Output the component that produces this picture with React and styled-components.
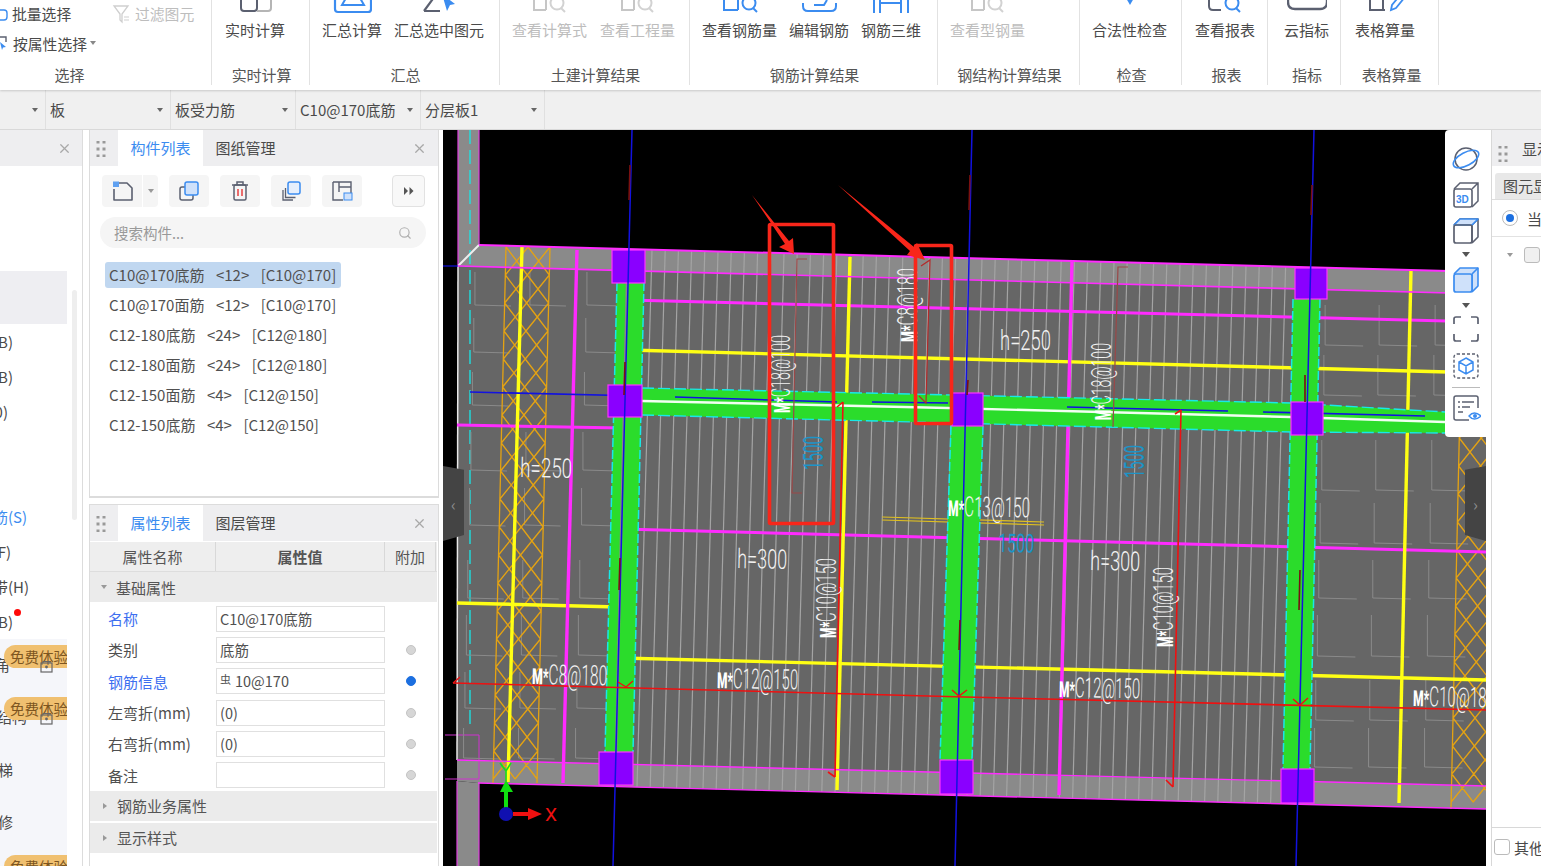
import React from "react";
import styled, { createGlobalStyle } from "styled-components";
import { X, Search } from "lucide-react";

const Global = createGlobalStyle`
  html, body { margin: 0; padding: 0; background: #fff; overflow: hidden; }
  #root { width: 1541px; height: 866px; }
  * { box-sizing: border-box; }
`;

const FONT = `"Noto Sans CJK SC", "Noto Sans", "Liberation Sans", sans-serif`;
const BLUE = "#3b8cf0";
const INK = "#5b6070";

const Page = styled.div`
  width: 1541px; height: 866px; overflow: hidden; display: flex; flex-direction: column;
  font-family: ${FONT}; font-size: 15px; color: #4a4a4a; background: #fff;
`;
const Ribbon = styled.div`
  height: 90px; flex: none; display: flex; background: #fff; box-shadow: 0 1px 2px rgba(0,0,0,.16); position: relative; z-index: 2;
`;
const Group = styled.div`
  width: ${p => p.$w}px; height: 85px; flex: none; display: flex; flex-direction: column;
  border-right: ${p => (p.$last ? "0" : "1px solid #e2e2e2")};
`;
const GroupBody = styled.div`
  height: 64px; display: flex; gap: ${p => p.$gap || 12}px; padding-left: ${p => p.$pad || 12}px;
`;
const GroupLabel = styled.div`
  height: 21px; line-height: 21px; text-align: center; color: #555; white-space: nowrap; font-size: 15px; letter-spacing: -.1px;
  padding-left: ${p => p.$nudge ?? 2}px; padding-right: ${p => p.$tail || 0}px;
`;
const Tool = styled.div`
  display: flex; flex-direction: column; align-items: center; white-space: nowrap; color: ${p => (p.$off ? "#bdbdbd" : "#4a4a4a")};
`;
const ToolIcon = styled.svg`
  width: 40px; height: 14px; display: block; margin-bottom: 6px; overflow: hidden;
`;
const ToolText = styled.span` line-height: 20px; `;

const SelectGrid = styled.div`
  height: 64px; display: grid; grid-template-columns: 112px 100px; grid-template-rows: 27px 32px;
`;
const SmallTool = styled.div`
  display: flex; align-items: center; gap: 3px; white-space: nowrap; font-size: 14.8px; color: ${p => (p.$off ? "#bdbdbd" : "#4a4a4a")};
`;

const SubBar = styled.div`
  height: 40px; flex: none; display: flex; background: #f0f0f0; border-bottom: 1px solid #d9d9d9; padding-left: 45px;
`;
const Combo = styled.div`
  width: 125px; display: flex; align-items: center; justify-content: space-between; padding: 0 7px 0 4px; border-left: 1px solid #e0e0e0; position: relative;
  &:last-child { border-right: 1px solid #e0e0e0; }
`;
const Caret = styled.span`
  width: 0; height: 0; border-left: 3px solid transparent; border-right: 3px solid transparent; border-top: 4px solid ${p => p.$c || "#666"}; flex: none; display: inline-block;
`;
const LeadCaret = styled(Caret)` position: absolute; left: 32px; top: 108px; `;

const Main = styled.div` flex: 1; display: flex; min-height: 0; background: #fff; `;

const NavPanel = styled.div`
  width: 83px; flex: none; border-right: 1px solid #dcdcdc; overflow: hidden; position: relative; display: flex; flex-direction: column; margin-right: 6px;
`;
const Header = styled.div`
  height: 36px; flex: none; background: #eeeef0; display: flex; align-items: stretch; position: relative;
`;
const Close = styled(X)`
  position: absolute; right: ${p => p.$r || 11}px; top: 11px; width: 15px; height: 15px; color: #a8a8a8;
`;
const NavBody = styled.div` flex: 1; padding-top: 105px; position: relative; `;
const NavSel = styled.div` width: 67px; height: 53px; background: #eeeef2; `;
const NavRow = styled.div`
  width: ${p => p.$end}px; height: ${p => p.$h || 35}px; display: flex; align-items: center; justify-content: flex-end; white-space: nowrap;
  color: ${p => p.$blue ? BLUE : "#4a4a4a"}; position: relative;
`;
const NavFree = styled.div` width: 67px; background: #f5f6fa; `;
const FreeRow = styled.div` height: 52.4px; position: relative; padding-top: 14px; white-space: nowrap; display: flex; `;
const Clip = styled.span` width: ${p => p.$end}px; display: flex; justify-content: flex-end; overflow: visible; height: 24px; line-height: 24px; `;
const Badge = styled.span`
  position: absolute; left: 4px; top: 6px; width: 63px; height: 23px; background: #f0c070; border-radius: 12px 0 0 12px; color: #7d5520; font-size: 14.5px; line-height: 23px; padding-left: 6px; white-space: nowrap; overflow: hidden;
`;
const Lock = styled.svg` position: absolute; left: 40px; top: 20px; width: 13px; height: 14px; `;
const Dot = styled.span` position: absolute; width: 7px; height: 7px; border-radius: 50%; background: #ff0a0a; left: 14px; top: 5px; `;
const NavScroll = styled.div` position: absolute; left: 72px; top: 124px; width: 5px; height: 230px; background: #eeeeee; border-radius: 3px; `;

const MidCol = styled.div` width: 350px; flex: none; display: flex; flex-direction: column; gap: 6px; margin-right: 4px; `;
const Panel = styled.div`
  border: 1px solid #dcdcdc; border-top: ${p => p.$nt ? 0 : "1px solid #dcdcdc"}; border-bottom: ${p => p.$nb ? 0 : "2px solid #dcdcdc"}; height: ${p => p.$h}px; flex: none; display: flex; flex-direction: column; overflow: hidden; background: #fff;
`;
const Grip = styled.svg` width: 10px; height: 16px; margin: 11px 12px 0 6px; flex: none; `;
const Tab = styled.div`
  width: 85px; text-align: center; line-height: 36px; white-space: nowrap;
  background: ${p => (p.$on ? "#fff" : "transparent")}; color: ${p => (p.$on ? BLUE : "#4a4a4a")};
`;
const IconRow = styled.div` height: 32px; margin: 9px 0 0 12px; display: flex; flex: none; position: relative; `;
const IconBtn = styled.div`
  width: ${p => p.$w || 40}px; height: 32px; background: #f5f5f5; border-radius: ${p => p.$r || "4px"}; display: flex; align-items: center; justify-content: center;
  margin-right: ${p => p.$m ?? 11}px;
`;
const MoreBtn = styled(IconBtn)` position: absolute; left: 290px; border: 1px solid #e2e2e2; background: #f8f8f8; width: 33px; `;
const SearchBox = styled.div`
  height: 31px; margin: 10px 12px 0 10px; flex: none; border-radius: 16px; background: #f5f5f5; display: flex; align-items: center; justify-content: space-between; padding: 0 14px; color: #999; font-size: 14.5px;
`;
const List = styled.div` margin: 12px 0 0 15px; display: flex; flex-direction: column; `;
const ListRow = styled.div`
  height: 30px; display: flex; align-items: center;
  & > span { padding: 0 4px; height: 26px; line-height: 26px; border-radius: 3px; white-space: pre; font-size: 15px; word-spacing: 2.4px; color: #505050; background: ${p => (p.$on ? "#c0d7f0" : "transparent")}; width: ${p => (p.$on ? "236px" : "auto")}; }
`;

const PropHead = styled.div`
  height: 31px; flex: none; display: grid; grid-template-columns: 126px 169px 51px; background: #eeeeee; border-top: 1px solid #fff; border-bottom: 1px solid #ddd; margin-right: 1px;
`;
const HeadCell = styled.div`
  text-align: center; line-height: 30px; border-right: 1px solid #d8d8d8; font-weight: ${p => p.$b ? 700 : 400}; color: #555; overflow: hidden;
`;
const Section = styled.div`
  height: ${p => p.$h || 30}px; background: #ebebeb; flex: none; margin-right: 1px; margin-bottom: ${p => p.$mb || 0}px; display: flex; align-items: center; padding-left: 11px; gap: 9px; color: #555;
`;
const ArrowDown = styled(Caret)` border-top-color: #999; `;
const ArrowRight = styled.span`
  width: 0; height: 0; border-top: 3.5px solid transparent; border-bottom: 3.5px solid transparent; border-left: 4px solid #999; margin: 0 1px 0 2px;
`;
const PropRows = styled.div` padding: 1px 0 0; flex: none; `;
const PropRow = styled.div`
  height: 31.3px; display: grid; grid-template-columns: 126px 169px 51px; align-items: center;
`;
const PropName = styled.div` padding-left: 18px; white-space: nowrap; color: ${p => (p.$blue ? "#3d6ff0" : "#4f4f4f")}; `;
const PropInput = styled.div`
  height: 26px; border: 1px solid #e0e0e0; line-height: 24px; padding-left: 3px; color: #505050; white-space: nowrap; font-size: 14.5px;
`;
const SteelMark = styled.span` font-size: 11px; position: relative; top: -3px; margin-right: 4px; `;
const Radio = styled.span`
  width: 10px; height: 10px; border-radius: 50%; justify-self: center; background: ${p => (p.$on ? "#1c6fe0" : "#d6d6d6")}; border: 1px solid ${p => (p.$on ? "#1c6fe0" : "#c4c4c4")};
`;

const Canvas = styled.div` width: 1043px; flex: none; position: relative; background: #000; overflow: hidden; margin-right: 5px; `;
const Drawing = styled.svg` display: block; width: 1043px; height: 736px; `;
const CadText = styled.text`
  font-family: Roboto, "Liberation Sans", sans-serif; fill: ${p => p.$c || "#f2f2f2"}; font-weight: ${p => (p.$c ? 400 : 300)};
`;
const CadMark = styled.tspan` font-weight: 900; fill: #fff; font-size: 22px; `;
const Handle = styled.div`
  position: absolute; top: 336px; width: 21px; height: 75px; background: #444; color: #8c8c8c; display: flex; align-items: center; justify-content: center; font-size: 16px;
  ${p => p.$side === "left"
    ? "left: 0; clip-path: polygon(0 0, 100% 5%, 100% 92%, 0 100%);"
    : "right: 0; clip-path: polygon(0 5%, 100% 0, 100% 100%, 0 92%);"}
`;
const ViewBar = styled.div`
  position: absolute; right: 0; top: 0; width: 41px; height: 307px; background: #fff; border-radius: 4px 0 0 4px; display: flex; flex-direction: column; align-items: center; padding-top: 14px;
`;
const ViewIcon = styled.svg` width: 30px; height: ${p => p.$h || 30}px; display: block; margin-bottom: ${p => p.$mb ?? 6}px; flex: none; `;
const ViewCaret = styled(Caret)` border-left-width: 4px; border-right-width: 4px; border-top-width: 5px; margin: ${p => p.$m || "6px 0 7px"}; border-top-color: #555; `;
const ViewSep = styled.div` width: 28px; height: 1px; background: #bbb; margin: 2px 0 5px; flex: none; `;

const RightPanel = styled.div`
  width: 50px; flex: none; border-left: 1px solid #d8d8d8; display: flex; flex-direction: column; overflow: hidden; white-space: nowrap;
`;
const RightHead = styled.div` height: 36px; flex: none; background: #eeeef0; display: flex; align-items: center; & > span { padding-left: 2px; } `;
const RightTab = styled.div` height: 26px; margin: 7px 0 0 3px; flex: none; background: #e8e8e8; line-height: 26px; padding-left: 8px; border-radius: 3px 0 0 0; `;
const RightRadioRow = styled.div` height: 38px; flex: none; display: flex; align-items: center; gap: 9px; padding-left: 10px; border-bottom: 1px solid #e2e2e2; border-top: 1px solid #ddd; `;
const RadioRing = styled.span` width: 16px; height: 16px; border-radius: 50%; border: 1px solid #bbb; display: flex; align-items: center; justify-content: center; flex: none; &::after { content: ""; width: 8px; height: 8px; border-radius: 50%; background: #1c6fe0; } `;
const TreeRow = styled.div` height: 36px; display: flex; align-items: center; gap: 11px; padding-left: 15px; flex: none; `;
const Check = styled.span` width: 16px; height: 16px; border: 1px solid #bbb; border-radius: 3px; background: ${p => p.$f ? "#f0f0f0" : "#fff"}; flex: none; `;
const Spacer = styled.div` flex: 1; `;
const RightFoot = styled.div` height: 39px; flex: none; border-top: 1px solid #d8d8d8; display: flex; align-items: center; gap: 4px; padding: 0 0 0 2px; `;

/* ----- little icons ----- */
const GripDots = () => (
  <Grip viewBox="0 0 10 16">
    {[1, 8, 15].flatMap(y => [2, 8].map(x => <rect key={x + "-" + y} x={x - 1.5} y={y - 1.5} width="3" height="3" fill="#999" />))}
  </Grip>
);

const Partial = ({ kind, off }) => {
  const d = off ? "#c6c6c6" : INK;
  const b = off ? "#d2d2d2" : BLUE;
  const shapes = {
    calc: <><path d="M6 -8V8q0 3 3 3H19q3 0 3-3V-8" fill="none" stroke={d} strokeWidth="2" /><path d="M22 11h11q3 0 3-3V-8" fill="none" stroke="#b5b5b5" strokeWidth="2" /></>,
    sum: <><rect x="3" y="-14" width="36" height="26" rx="3" fill="none" stroke={BLUE} strokeWidth="2.2" /><path d="M10 5h22L28 -2H14z" fill="none" stroke={BLUE} strokeWidth="2" /></>,
    sumSel: <><path d="M5 11H21M5 11L16 -4" fill="none" stroke={d} strokeWidth="2.2" /><path d="M23 -6l13 10-5 1-3 6z" fill={BLUE} /></>,
    view: <><path d="M4 -6V10H16M16 -6V10" fill="none" stroke={d} strokeWidth="2" /><circle cx="27" cy="3" r="6.5" fill="none" stroke={b} strokeWidth="2" /><path d="M31 8l4 4" stroke={b} strokeWidth="2" /></>,
    viewBlue: <><path d="M4 -6V10H18M18 -6V10" fill="none" stroke={BLUE} strokeWidth="2" /><circle cx="29" cy="3" r="6.5" fill="none" stroke={BLUE} strokeWidth="2" /><path d="M33 8l4 4" stroke={BLUE} strokeWidth="2" /></>,
    edit: <><path d="M4 3V6q0 5 5 5H32q5 0 5-5V3" fill="none" stroke={BLUE} strokeWidth="2" /><path d="M15 5h10l3-5" fill="none" stroke={BLUE} strokeWidth="2" /></>,
    three: <><path d="M3 -8V13M9 -8V13M30 -8V13M37 -8V13" fill="none" stroke={BLUE} strokeWidth="2" /><path d="M9 3H30" stroke={BLUE} strokeWidth="2" /></>,
    check: <path d="M16 -2h8l-4 7z" fill={BLUE} />,
    report: <><path d="M4 -6V6q0 4 4 4H16" fill="none" stroke={d} strokeWidth="2" /><circle cx="27" cy="3" r="6.5" fill="none" stroke={BLUE} strokeWidth="2" /><path d="M31 8l4 4" stroke={BLUE} strokeWidth="2" /></>,
    cloud: <path d="M1 -6V2q0 7 7 7H33q7 0 7-7V-6" fill="none" stroke={d} strokeWidth="2.4" />,
    sheet: <><path d="M5 -6V10H20M18 -6V10" fill="none" stroke={d} strokeWidth="2" /><path d="M26 10l1-5 9-11 4 3-9 11z" fill="none" stroke={BLUE} strokeWidth="1.8" /></>,
  };
  return <ToolIcon viewBox="0 0 40 14">{shapes[kind]}</ToolIcon>;
};

const RTool = ({ kind, off, children }) => (
  <Tool $off={off}><Partial kind={kind} off={off} /><ToolText>{children}</ToolText></Tool>
);

/* ----- CAD drawing ----- */
const range = (a, b, s) => { const o = []; for (let v = a; v <= b; v += s) o.push(v); return o; };
const PINK = "#ff2bff";
const YEL = "#ffff14";
const CYAN = "#18e8e8";
const GREEN = "#2bdc2b";

const Hatch = ({ l0, l1, y0, y1, w }) => {
  const at = y => l0 + ((y - y0) / (y1 - y0)) * (l1 - l0);
  const p = 28;
  const out = [];
  range(y0, y1 - p, p).forEach(y => {
    const a = at(y), b = at(y + p);
    [0, .5].forEach(f => {
      out.push(`M${a + f * w} ${y}L${b + (f + .5) * w} ${y + p}`);
      out.push(`M${a + (f + .5) * w} ${y}L${b + f * w} ${y + p}`);
    });
  });
  out.push(`M${l0} ${y0}L${l1} ${y1}M${l0 + w} ${y0}L${l1 + w} ${y1}`);
  return <path d={out.join("")} fill="none" stroke="#e5a312" strokeWidth="1.3" />;
};

const Corners = () => {
  const out = [];
  const rows = [[272, 305], [318, 352], [372, 405], [432, 470], [488, 525], [560, 598], [615, 655], [672, 708], [728, 758]];
  rows.forEach(([a, b]) => {
    [475, 530, 587].forEach(x => {
      const xx = x - (a - 270) * 0.025;
      if (x === 530 && a < 430 && a > 300) return;
      out.push(`M${xx} ${a}L${xx} ${b}L${xx + 36} ${b + 1}`);
    });
  });
  const rows2 = [[305, 345], [355, 395], [440, 490], [503, 543], [560, 598], [615, 656], [680, 720], [728, 767]];
  rows2.forEach(([a, b]) => {
    [1326, 1380, 1436].forEach(x => {
      const xx = x - (a - 270) * 0.025;
      out.push(`M${xx} ${a}L${xx} ${b}L${xx + 38} ${b + 1}`);
    });
  });
  return <path d={out.join("")} fill="none" stroke="#8a8a8a" strokeWidth="1" />;
};

const Beam = ({ a, b, c, d, line }) => (
  <>
    <polygon points={`${a} ${b} ${c} ${b} ${d[1]} ${d[2]} ${d[0]} ${d[2]}`} fill={GREEN} />
    <line x1={a} y1={b} x2={d[0]} y2={d[2]} stroke={CYAN} strokeWidth="1.5" strokeDasharray="9 3" />
    <line x1={c} y1={b} x2={d[1]} y2={d[2]} stroke={CYAN} strokeWidth="1.5" strokeDasharray="9 3" />
    {line}
  </>
);

const Pier = ({ x, y, w = 33, h = 33 }) => <rect x={x} y={y} width={w} height={h} fill="#8a00ff" stroke="#ff33ff" strokeWidth="1.2" />;

const Label = ({ x, y, len, size = 28, rot = 1.4, c, mark, children }) => (
  <CadText x={x} y={y} fontSize={size} textLength={len} lengthAdjust="spacingAndGlyphs" $c={c}
    transform={`rotate(${rot} ${x} ${y})`}>{mark && <CadMark>{mark}</CadMark>}{children}</CadText>
);

const Plan = () => {
  const rebar = range(652, 1292, 13.2);
  const topY = x => 245 + ((x - 479) * 27) / 1007;
  const botY = x => 783 + ((x - 478) * 26) / 1008;
  return (
    <Drawing viewBox="443 130 1043 736">
      <polygon points="458,130 479,130 479,245 458,266" fill="#8a8a8a" />
      <polygon points="457,781 479,783 479,866 457,866" fill="#8a8a8a" />
      <polygon points="458,266 479,245 1486,272 1486,294" fill="#8a8a8a" />
      <polygon points="458,266 1486,294 1486,786 457,760" fill="#666" />
      <polygon points="457,760 1486,786 1486,809 478,783 457,781" fill="#8a8a8a" />

      <path d="M458 130V266M479 130V245M457 781V866M479 783V866" stroke="#e040e0" strokeWidth="1.2" fill="none" />
      <path d="M445 735H479V779H445" stroke="#d030d0" strokeWidth="1" fill="none" />
      <line x1="470" y1="130" x2="470" y2="730" stroke={CYAN} strokeWidth="1.3" strokeDasharray="14 6" />
      <path d="M458 266L479 245" stroke="#eee" strokeWidth="2" />
      <line x1="458" y1="266" x2="457" y2="760" stroke="#e8e8e8" strokeWidth="1.5" />
      <line x1="443" y1="266" x2="458" y2="266" stroke="#1010e0" strokeWidth="1.2" />

      {rebar.map(x => (
        <line key={x} x1={x} y1={topY(x)} x2={x - 15} y2={botY(x - 15)} stroke="#a4a4a4" strokeWidth="1.2" />
      ))}
      <Corners />
      <Hatch l0={506} l1={493} y0={247} y1={783} w={44} />
      <Hatch l0={1463} l1={1451} y0={270} y1={809} w={44} />

      <line x1="628" y1="300" x2="1486" y2="322" stroke={PINK} strokeWidth="3" />
      <line x1="457" y1="425" x2="622" y2="428" stroke={PINK} strokeWidth="3" />
      <line x1="622" y1="529" x2="1486" y2="552" stroke={PINK} strokeWidth="3" />
      <line x1="628" y1="350" x2="1486" y2="373" stroke={YEL} strokeWidth="3.4" />
      <line x1="457" y1="603" x2="618" y2="607" stroke={YEL} strokeWidth="3.4" />
      <line x1="620" y1="658" x2="1486" y2="680" stroke={YEL} strokeWidth="3.4" />
      <path d="M882 517L1044 522M882 520L1044 525" stroke="#e0c020" strokeWidth="1.2" />

      <line x1="522" y1="247" x2="508" y2="782" stroke={YEL} strokeWidth="3.4" />
      <line x1="850" y1="257" x2="837" y2="790" stroke={YEL} strokeWidth="3.4" />
      <line x1="1411" y1="270" x2="1399" y2="803" stroke={YEL} strokeWidth="3.4" />
      <line x1="577" y1="250" x2="563" y2="783" stroke={PINK} strokeWidth="3.4" />
      <line x1="1072" y1="262" x2="1059" y2="795" stroke={PINK} strokeWidth="3.4" />

      <Beam a={617} b={282} c={644} d={[605, 633, 752]} line={<line x1="627" y1="282" x2="616" y2="752" stroke="#888" strokeWidth="2.5" />} />
      <Beam a={951} b={426} c={983} d={[940, 972, 760]} />
      <Beam a={1293} b={299} c={1320} d={[1283, 1310, 769]} />
      <polygon points="642,388 953,395 1291,403 1445,412 1445,433 1291,432 953,423 642,415" fill={GREEN} />
      <path d="M642 388L953 395L1291 403L1445 412M642 415L953 423L1291 432L1445 433" stroke={CYAN} strokeWidth="1.4" strokeDasharray="12 4" fill="none" />
      <path d="M642 401L948 408L1290 417L1445 422" stroke="#f2fff2" strokeWidth="2.4" fill="none" />
      <path d="M470 392L642 396M675 397L837 402M872 402L948 403M1067 407L1228 411M1263 412L1425 416" stroke="#1212e0" strokeWidth="1.6" fill="none" />

      <path d="M479 245L1486 272" stroke={PINK} strokeWidth="2" />
      <path d="M458 266L1486 294" stroke={PINK} strokeWidth="1.6" />
      <path d="M457 760L1486 786" stroke={PINK} strokeWidth="1.4" />
      <path d="M478 783L1486 809" stroke={PINK} strokeWidth="1.4" />

      <Pier x={612} y={250} />
      <Pier x={608} y={385} h={32} w={34} />
      <Pier x={599} y={752} w={34} />
      <Pier x={952} y={393} w={31} />
      <Pier x={940} y={760} h={34} w={33} />
      <Pier x={1295} y={268} w={32} h={31} />
      <Pier x={1291} y={402} w={32} />
      <Pier x={1281} y={769} h={34} />

      <path d="M632 130L613 866M972 130L955 866M1314 130L1296 866" stroke="#1212e0" strokeWidth="1.5" fill="none" />
      <path d="M630 165L629 200M970 175L969 210M1312 185L1311 215M625 362L624 395M968 380L967 395M1305 375L1305 402M620 558L619 590M960 620L959 650M1300 570L1299 610" stroke="#7a1010" strokeWidth="1.6" fill="none" />

      <path d="M453 683L965 697L1486 710" stroke="#ee1111" strokeWidth="1.6" fill="none" />
      <path d="M453 683L460 677M618 682l8 5 7-6M952 690l7 6 8-6M1293 699l7 6 8-7" stroke="#ee1111" strokeWidth="1.4" fill="none" />
      <path d="M1181 410L1173 787M1173 787l-7-7M1181 410l-6 4" stroke="#ee1111" strokeWidth="1.6" fill="none" />
      <path d="M843 402L835 777M835 777l-7-5M843 402l-6 5" stroke="#ee1111" strokeWidth="1.6" fill="none" />
      <path d="M807 259H797L792 493H802M1128 267H1118L1113 427" stroke="#9a4848" strokeWidth="1.2" fill="none" />
      <path d="M921 266L930 260L926 403L919 396" stroke="#b52a2a" strokeWidth="1.2" fill="none" />

      <Label x={520} y={477} len={52} size={27} rot={1}>h=250</Label>
      <Label x={1000} y={350} len={51} size={27} rot={0}>h=250</Label>
      <Label x={737} y={568} len={50} size={27} rot={1}>h=300</Label>
      <Label x={1090} y={570} len={50} size={27} rot={1}>h=300</Label>
      <Label x={532} y={684} len={75} size={28} rot={1} mark="M*">C8@180</Label>
      <Label x={717} y={688} len={81} size={28} rot={1} mark="M*">C12@150</Label>
      <Label x={1059} y={697} len={81} size={28} rot={1} mark="M*">C12@150</Label>
      <Label x={1413} y={706} len={82} size={28} rot={1} mark="M*">C10@180</Label>
      <Label x={948} y={516} len={82} size={28} rot={1} mark="M*">C13@150</Label>
      <Label x={790} y={413} len={78} size={27} rot={-90} mark="M*">C18@100</Label>
      <Label x={917} y={342} len={74} size={27} rot={-90} mark="M*">C8@180</Label>
      <Label x={1111} y={420} len={77} size={27} rot={-90} mark="M*">C18@100</Label>
      <Label x={836} y={638} len={80} size={27} rot={-90} mark="M*">C10@150</Label>
      <Label x={1173} y={647} len={80} size={27} rot={-90} mark="M*">C10@150</Label>
      <Label x={823} y={470} len={34} size={27} rot={-90} c="#1c94c8">1500</Label>
      <Label x={1144} y={478} len={33} size={27} rot={-90} c="#1c94c8">1500</Label>
      <Label x={998} y={552} len={36} size={26} rot={1} c="#1c94c8">1500</Label>

      <path d="M500 763l6 8 5-8M506 771V781" stroke="#18e018" strokeWidth="1.6" fill="none" />
      <path d="M506 780l7 12H500z" fill="#10e010" />
      <rect x="504" y="792" width="4" height="20" fill="#10e010" />
      <rect x="513" y="812" width="16" height="4" fill="#f01010" />
      <path d="M528 808l14 6-14 6z" fill="#f01010" />
      <circle cx="506" cy="814" r="7" fill="#1010b0" />
      <CadText x="545" y="821" fontSize="19" $c="#f01010" textLength="12" lengthAdjust="spacingAndGlyphs">X</CadText>

      <rect x="769.5" y="224.5" width="64" height="299" fill="none" stroke="#f8261a" strokeWidth="3.6" rx="1" />
      <rect x="915.5" y="245.5" width="36" height="178" fill="none" stroke="#f8261a" strokeWidth="3.6" rx="1" />
      <polygon points="752,195 789,241 793,238 794,254 779,247 785,244" fill="#f8261a" />
      <polygon points="838,185 914,247 917,243 925,260 907,255 910,251" fill="#f8261a" />
    </Drawing>
  );
};

const Cube = ({ fill, top }) => (
  <ViewIcon viewBox="0 0 30 30">
    <path d="M3 9L9 3H27V21L21 27" fill={fill ? "#cfe1fa" : "none"} stroke={fill ? BLUE : INK} strokeWidth="1.6" strokeLinejoin="round" />
    <path d="M21 9V27M21 9L27 3" stroke={fill ? BLUE : INK} strokeWidth="1.6" />
    {top && <path d="M3 9L9 3H27L21 9z" fill="#cfe1fa" stroke={BLUE} strokeWidth="1.6" strokeLinejoin="round" />}
    <rect x="3" y="9" width="18" height="18" rx="2" fill={fill ? "#cfe1fa" : "none"} stroke={fill ? BLUE : INK} strokeWidth="1.7" />
  </ViewIcon>
);

const names = [
  "C10@170底筋  <12>  [C10@170]",
  "C10@170面筋  <12>  [C10@170]",
  "C12-180底筋  <24>  [C12@180]",
  "C12-180面筋  <24>  [C12@180]",
  "C12-150面筋  <4>  [C12@150]",
  "C12-150底筋  <4>  [C12@150]",
];

const props = [
  { n: "名称", v: "C10@170底筋", blue: true },
  { n: "类别", v: "底筋", r: true },
  { n: "钢筋信息", v: "10@170", steel: true, blue: true, r: true, on: true },
  { n: "左弯折(mm)", v: "(0)", r: true },
  { n: "右弯折(mm)", v: "(0)", r: true },
  { n: "备注", v: "", r: true },
];

const LockIcon = () => (
  <Lock viewBox="0 0 13 14">
    <path d="M3 4V2.5h7V4" fill="none" stroke="#666" />
    <rect x="1" y="4" width="11" height="9" fill="none" stroke="#666" strokeWidth="1.2" />
    <circle cx="6.5" cy="8" r="1.4" fill="#666" />
  </Lock>
);

export default function App() {
  return (
    <Page>
      <Global />
      <Ribbon>
        <Group $w={212}>
          <SelectGrid>
            <SmallTool>
              <svg width="9" height="14" viewBox="0 0 9 14"><path d="M-2 3h6q3 0 3 3v4q0 3-3 3H-2" fill="none" stroke={BLUE} strokeWidth="1.4" /></svg>
              批量选择
            </SmallTool>
            <SmallTool $off>
              <svg width="20" height="20" viewBox="0 0 20 20"><path d="M2 2h14l-6 8v8l-2-2v-6z" fill="none" stroke="#cfcfcf" strokeWidth="1.3" /><path d="M12 13h5M12 16h5" stroke="#cfcfcf" /></svg>
              过滤图元
            </SmallTool>
            <SmallTool>
              <svg width="10" height="16" viewBox="0 0 10 16"><path d="M-2 2h8v5" fill="none" stroke={INK} strokeWidth="1.4" /><path d="M0 7l6 5-3 .5-1 2.5z" fill={BLUE} /></svg>
              按属性选择<Caret $c="#888" />
            </SmallTool>
          </SelectGrid>
          <GroupLabel $nudge={0} $tail={72}>选择</GroupLabel>
        </Group>
        <Group $w={98}>
          <GroupBody $pad={13}><RTool kind="calc">实时计算</RTool></GroupBody>
          <GroupLabel>实时计算</GroupLabel>
        </Group>
        <Group $w={190}>
          <GroupBody><RTool kind="sum">汇总计算</RTool><RTool kind="sumSel">汇总选中图元</RTool></GroupBody>
          <GroupLabel>汇总</GroupLabel>
        </Group>
        <Group $w={190}>
          <GroupBody $gap={13}><RTool kind="view" off>查看计算式</RTool><RTool kind="view" off>查看工程量</RTool></GroupBody>
          <GroupLabel>土建计算结果</GroupLabel>
        </Group>
        <Group $w={248}>
          <GroupBody><RTool kind="viewBlue">查看钢筋量</RTool><RTool kind="edit">编辑钢筋</RTool><RTool kind="three">钢筋三维</RTool></GroupBody>
          <GroupLabel>钢筋计算结果</GroupLabel>
        </Group>
        <Group $w={142}>
          <GroupBody><RTool kind="view" off>查看型钢量</RTool></GroupBody>
          <GroupLabel>钢结构计算结果</GroupLabel>
        </Group>
        <Group $w={102}>
          <GroupBody><RTool kind="check">合法性检查</RTool></GroupBody>
          <GroupLabel>检查</GroupLabel>
        </Group>
        <Group $w={86}>
          <GroupBody $pad={13}><RTool kind="report">查看报表</RTool></GroupBody>
          <GroupLabel $nudge={4}>报表</GroupLabel>
        </Group>
        <Group $w={73}>
          <GroupBody $pad={16}><RTool kind="cloud">云指标</RTool></GroupBody>
          <GroupLabel $nudge={6}>指标</GroupLabel>
        </Group>
        <Group $w={98}>
          <GroupBody $pad={14}><RTool kind="sheet">表格算量</RTool></GroupBody>
          <GroupLabel $nudge={4}>表格算量</GroupLabel>
        </Group>
      </Ribbon>

      <SubBar>
        <LeadCaret />
        <Combo><span>板</span><Caret /></Combo>
        <Combo><span>板受力筋</span><Caret /></Combo>
        <Combo><span>C10@170底筋</span><Caret /></Combo>
        <Combo><span>分层板1</span><Caret /></Combo>
      </SubBar>

      <Main>
        <NavPanel>
          <Header><Close $r={10} /></Header>
          <NavBody>
            <NavSel />
            <NavRow $end={13}>现浇板(B)</NavRow>
            <NavRow $end={13}>螺旋板(B)</NavRow>
            <NavRow $end={8}>板洞(0)</NavRow>
            <NavRow $end={8}></NavRow>
            <NavRow $end={8}></NavRow>
            <NavRow $end={27} $blue>板受力筋(S)</NavRow>
            <NavRow $end={11}>板负筋(F)</NavRow>
            <NavRow $end={29}>楼层板带(H)</NavRow>
            <NavRow $end={13}>板加腋(B)<Dot /></NavRow>
            <NavFree>
              <FreeRow><Clip $end={10}>板角</Clip><Badge>免费体验</Badge><LockIcon /></FreeRow>
              <FreeRow><Clip $end={27}>板结构</Clip><Badge>免费体验</Badge><LockIcon /></FreeRow>
              <FreeRow><Clip $end={13}>楼梯</Clip></FreeRow>
              <FreeRow><Clip $end={13}>装修</Clip></FreeRow>
              <FreeRow><Clip $end={10}>板</Clip><Badge>免费体验</Badge></FreeRow>
            </NavFree>
            <NavScroll />
          </NavBody>
        </NavPanel>

        <MidCol>
          <Panel $h={368} $nt>
            <Header>
              <GripDots />
              <Tab $on>构件列表</Tab><Tab>图纸管理</Tab>
              <Close />
            </Header>
            <IconRow>
              <IconBtn $w={40} $m={1} $r="4px 0 0 4px">
                <svg width="22" height="22" viewBox="0 0 22 22"><path d="M8 3H16L21 8V20H3V9" fill="none" stroke={INK} strokeWidth="1.6" strokeLinejoin="round" /><rect x="2" y="1.500" width="6" height="5.500" fill={BLUE} opacity=".8" /></svg>
              </IconBtn>
              <IconBtn $w={15} $r="0 4px 4px 0"><Caret $c="#999" /></IconBtn>
              <IconBtn>
                <svg width="22" height="22" viewBox="0 0 22 22"><rect x="2" y="7" width="13" height="13" rx="2" fill="none" stroke={INK} strokeWidth="1.5" /><rect x="7" y="2" width="13" height="13" rx="2" fill="#cfe1fa" stroke={BLUE} strokeWidth="1.5" /></svg>
              </IconBtn>
              <IconBtn>
                <svg width="22" height="22" viewBox="0 0 22 22"><path d="M3 5h16M8 5V2h6v3" fill="none" stroke={INK} strokeWidth="1.5" /><rect x="5" y="5" width="12" height="15" rx="1.5" fill="none" stroke={INK} strokeWidth="1.5" /><path d="M9 9v7M13 9v7" stroke="#e84040" strokeWidth="1.5" /></svg>
              </IconBtn>
              <IconBtn>
                <svg width="22" height="22" viewBox="0 0 22 22"><path d="M3 10v10h10" fill="none" stroke={INK} strokeWidth="1.3" /><path d="M5.500 8v9.500h10" fill="none" stroke={INK} strokeWidth="1.3" /><rect x="8" y="2" width="12" height="12" rx="2" fill="#e6effc" stroke={BLUE} strokeWidth="1.5" /></svg>
              </IconBtn>
              <IconBtn>
                <svg width="22" height="22" viewBox="0 0 22 22"><path d="M2 2h18v11M2 2v18h10M8 2v10M8 7h12" fill="none" stroke={INK} strokeWidth="1.4" /><rect x="13" y="13" width="8" height="7" fill="#cfe1fa" stroke={BLUE} /></svg>
              </IconBtn>
              <MoreBtn>
                <svg width="10" height="8" viewBox="0 0 10 8"><path d="M0 0l4 4-4 4zM5.500 0l4 4-4 4z" fill="#555" /></svg>
              </MoreBtn>
            </IconRow>
            <SearchBox>
              <span>搜索构件...</span>
              <Search size={14} color="#b0b0b0" />
            </SearchBox>
            <List>
              {names.map((n, i) => <ListRow key={n} $on={i === 0}><span>{n}</span></ListRow>)}
            </List>
          </Panel>

          <Panel $h={362} $nb>
            <Header>
              <GripDots />
              <Tab $on>属性列表</Tab><Tab>图层管理</Tab>
              <Close />
            </Header>
            <PropHead>
              <HeadCell>属性名称</HeadCell>
              <HeadCell $b>属性值</HeadCell>
              <HeadCell>附加</HeadCell>
            </PropHead>
            <Section><ArrowDown />基础属性</Section>
            <PropRows>
              {props.map(p => (
                <PropRow key={p.n}>
                  <PropName $blue={p.blue}>{p.n}</PropName>
                  <PropInput>{p.steel && <SteelMark>虫</SteelMark>}{p.v}</PropInput>
                  {p.r ? <Radio $on={p.on} /> : <span />}
                </PropRow>
              ))}
            </PropRows>
            <Section $mb={2}><ArrowRight />钢筋业务属性</Section>
            <Section><ArrowRight />显示样式</Section>
          </Panel>
        </MidCol>

        <Canvas>
          <Plan />
          <Handle $side="left">‹</Handle>
          <Handle $side="right">›</Handle>
          <ViewBar>
            <ViewIcon viewBox="0 0 30 30">
              <circle cx="15" cy="15" r="11" fill="none" stroke={INK} strokeWidth="1.5" />
              <ellipse cx="15" cy="15" rx="14" ry="6.500" transform="rotate(-28 15 15)" fill="none" stroke={BLUE} strokeWidth="1.6" />
            </ViewIcon>
            <ViewIcon viewBox="0 0 30 30">
              <path d="M3 9L9 3H27V21L21 27M21 9L27 3" fill="none" stroke={INK} strokeWidth="1.5" />
              <rect x="3" y="9" width="18" height="18" rx="2" fill="#fff" stroke={INK} strokeWidth="1.6" />
              <text x="5" y="23" fontSize="10" fontWeight="700" fill={BLUE} fontFamily="Liberation Sans">3D</text>
            </ViewIcon>
            <Cube top />
            <ViewCaret $m="0 0 8px" />
            <Cube fill />
            <ViewCaret $m="2px 0 6px" />
            <ViewIcon viewBox="0 0 30 30" $mb={7}>
              <path d="M3 10V5q0-2 2-2h5M20 3h5q2 0 2 2v5M27 20v5q0 2-2 2h-5M10 27H5q-2 0-2-2v-5" fill="none" stroke={INK} strokeWidth="1.7" />
            </ViewIcon>
            <ViewIcon viewBox="0 0 30 30" $mb={4}>
              <rect x="3" y="3" width="24" height="24" rx="3" fill="none" stroke={INK} strokeWidth="1.4" strokeDasharray="3 2" />
              <path d="M15 7l7 4v8l-7 4-7-4v-8zM8 11l7 4 7-4M15 15v8" fill="none" stroke={BLUE} strokeWidth="1.5" />
            </ViewIcon>
            <ViewSep />
            <ViewIcon viewBox="0 0 30 30">
              <path d="M27 15V5q0-2-2-2H5Q3 3 3 5v20q0 2 2 2h13" fill="none" stroke={INK} strokeWidth="1.5" />
              <path d="M7 9h2M11 9h12M7 14h2M11 14h8M7 19h5" stroke={INK} strokeWidth="1.3" />
              <path d="M18 23q5-6 12 0q-7 6-12 0z" fill="#fff" stroke={BLUE} strokeWidth="1.4" />
              <circle cx="24" cy="23" r="2" fill={BLUE} />
            </ViewIcon>
          </ViewBar>
        </Canvas>

        <RightPanel>
          <RightHead><GripDots /><span>显示设置</span></RightHead>
          <RightTab>图元显示</RightTab>
          <RightRadioRow><RadioRing />当前楼层</RightRadioRow>
          <TreeRow><ArrowDown /><Check $f /></TreeRow>
          <Spacer />
          <RightFoot><Check />其他</RightFoot>
        </RightPanel>
      </Main>
    </Page>
  );
}
